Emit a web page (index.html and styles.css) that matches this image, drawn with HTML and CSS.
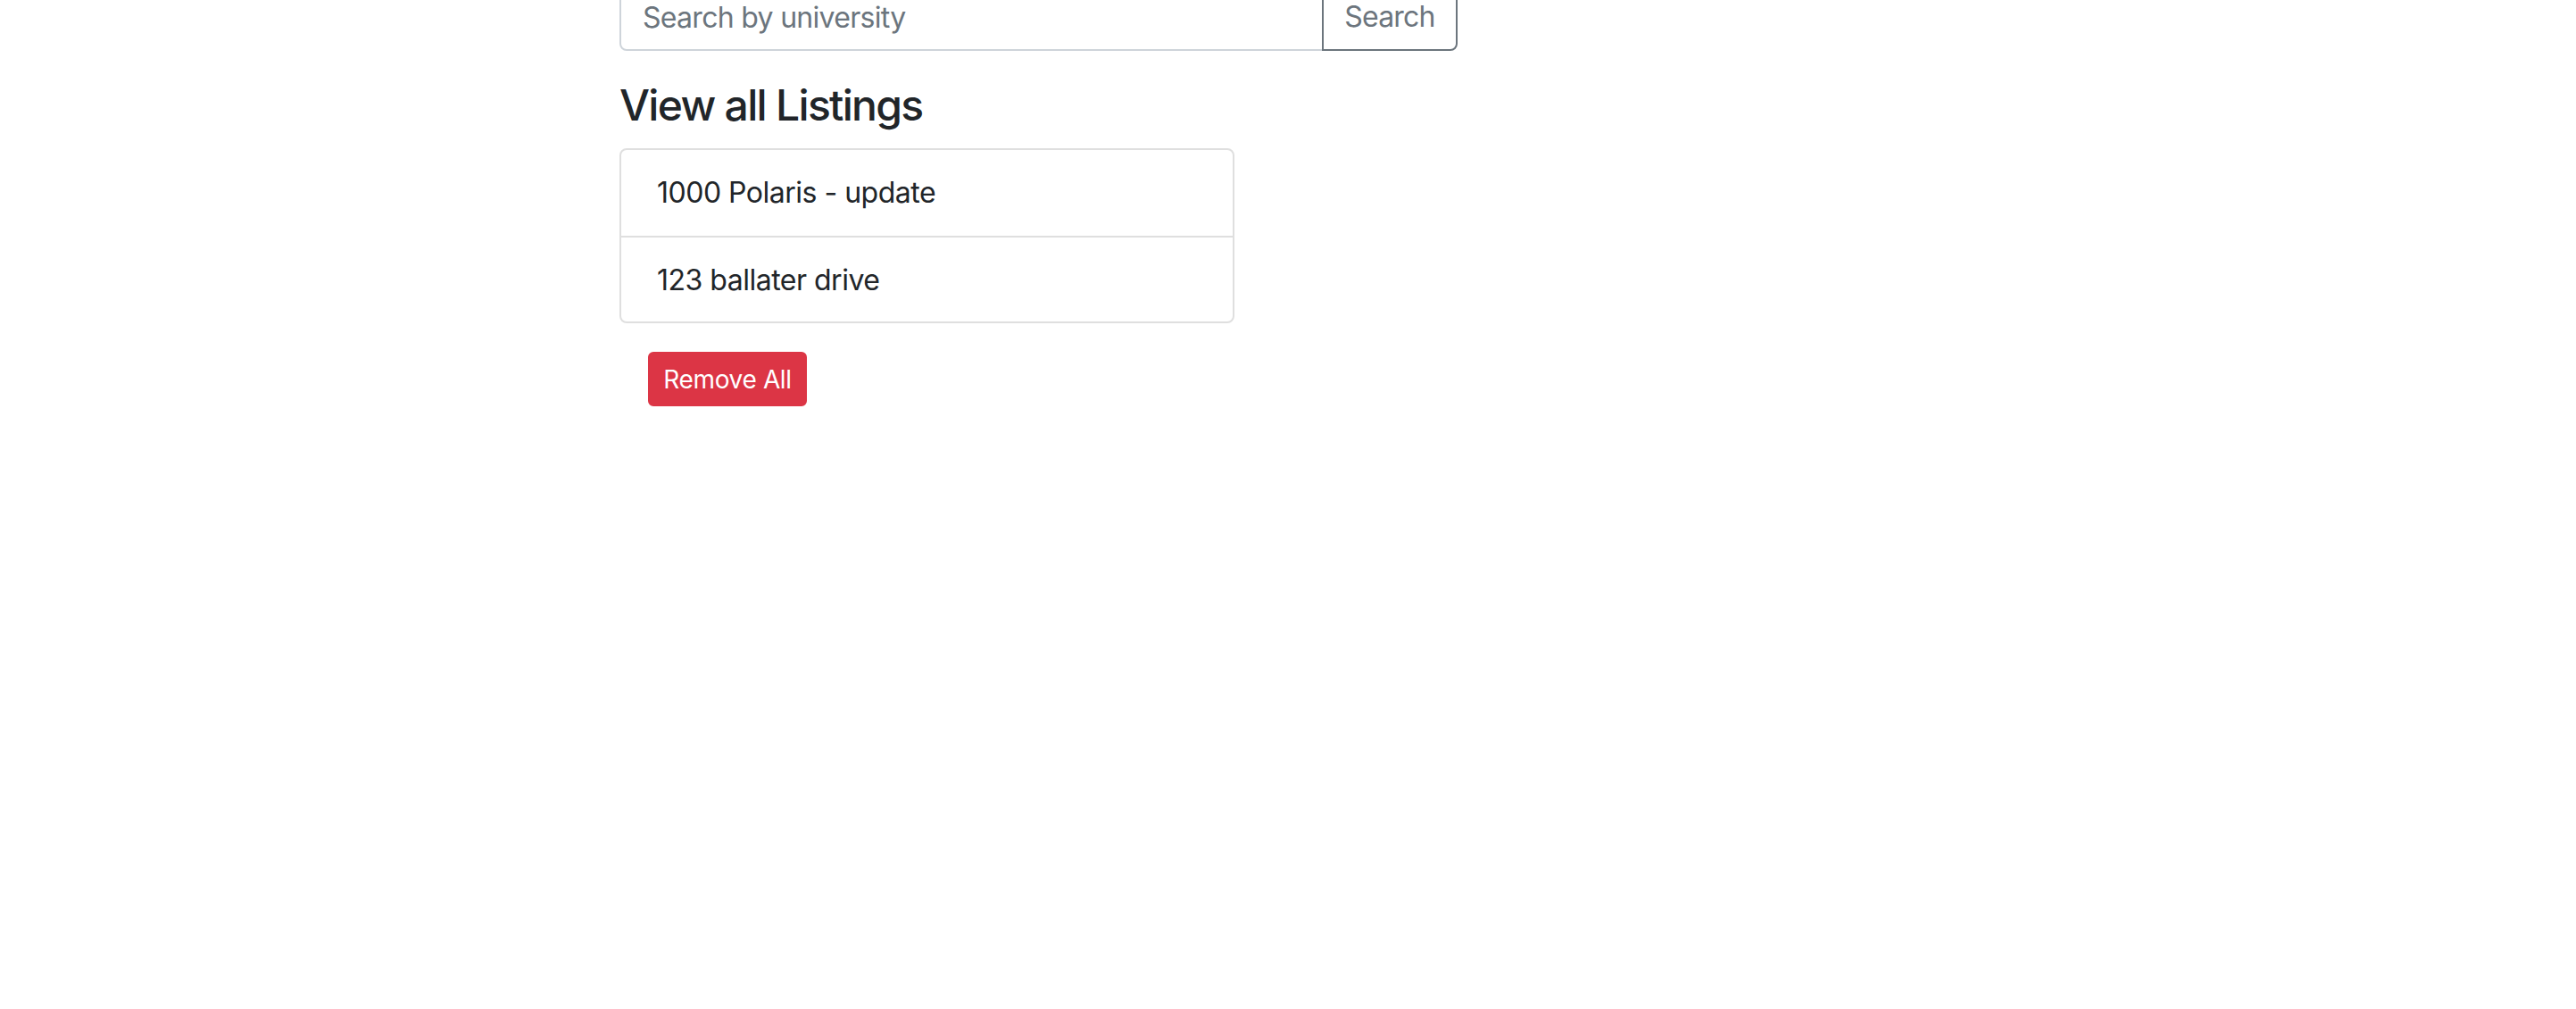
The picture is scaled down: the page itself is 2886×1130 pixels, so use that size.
FILE: index.html
```html
<!DOCTYPE html>
<html lang="en">
<head>
<meta charset="utf-8">
<title>Listings</title>
<link rel="stylesheet" href="styles.css">
</head>
<body>
<main class="page">
  <div class="search-group">
    <input class="search-input" type="text" placeholder="Search by university">
    <button class="search-btn" type="button">Search</button>
  </div>
  <h4 class="title">View all Listings</h4>
  <ul class="list-group">
    <li class="list-item">1000 Polaris - update</li>
    <li class="list-item">123 ballater drive</li>
  </ul>
  <button class="btn-danger" type="button">Remove All</button>
</main>
</body>
</html>
```

FILE: styles.css
```css
* { box-sizing: border-box; }
html, body { margin: 0; padding: 0; background: #fff; }
body {
  font-family: Inter, "Noto Sans", "Liberation Sans", sans-serif;
  color: #212529;
  font-size: 32px;
  line-height: 1.5;
}
.page {
  padding-left: 694px;
  display: flex;
  flex-direction: column;
  align-items: flex-start;
}
.search-group {
  display: flex;
  width: 939px;
  margin-top: -19px;
  margin-bottom: 32px;
}
.search-input {
  flex: 1 1 auto;
  height: 76px;
  padding: 12px 24px;
  font-family: inherit;
  font-size: 32px;
  line-height: 48px;
  letter-spacing: -0.7px;
  color: #495057;
  border: 2px solid #ced4da;
  border-radius: 8px 0 0 8px;
  background: #fff;
  outline: none;
}
.search-input::placeholder { color: #6c757d; opacity: 1; }
.search-btn {
  width: 152px;
  height: 76px;
  margin-left: -2px;
  padding: 12px 0;
  text-align: center;
  font-family: inherit;
  font-size: 32px;
  line-height: 48px;
  letter-spacing: -0.8px;
  color: #6c757d;
  background: #fff;
  border: 2px solid #6c757d;
  border-radius: 0 8px 8px 0;
}
.title {
  margin: 0 0 19px;
  font-size: 48px;
  font-weight: 500;
  line-height: 1.2;
  letter-spacing: -1.7px;
  color: #212529;
}
.list-group {
  list-style: none;
  margin: 0;
  padding: 0;
  width: 689px;
  border: 2px solid #dfdfdf;
  border-radius: 8px;
}
.list-item {
  height: 96px;
  padding: 24px 40px;
  font-size: 32px;
  line-height: 48px;
  letter-spacing: -0.5px;
}
.list-item + .list-item { height: 96px; border-top: 2px solid #dfdfdf; }
.btn-danger {
  margin: 32px;
  width: 178px;
  height: 61px;
  padding: 8px 0;
  text-align: center;
  font-family: inherit;
  font-size: 28px;
  line-height: 42px;
  letter-spacing: -0.35px;
  color: #fff;
  background: #dc3545;
  border: 2px solid #dc3545;
  border-radius: 6px;
}
```
